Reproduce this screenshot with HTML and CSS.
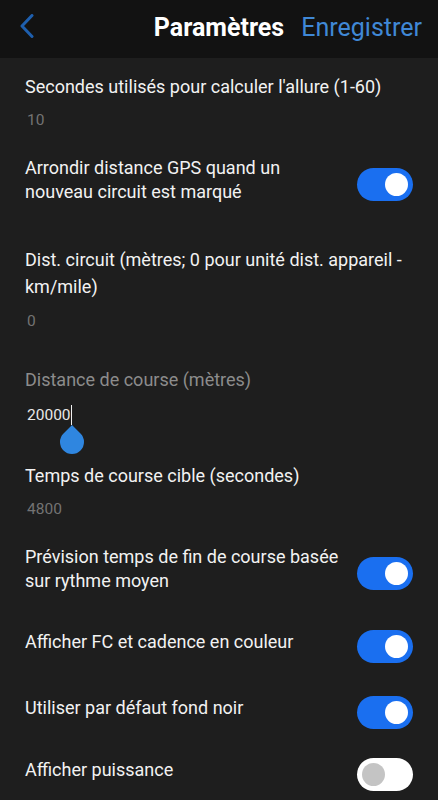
FILE: index.html
```html
<!DOCTYPE html>
<html lang="fr">
<head>
    <meta charset="UTF-8">
    <meta name="viewport" content="width=device-width, initial-scale=1.0">
    <title>Paramètres</title>
    <link rel="stylesheet" href="styles.css">
</head>
<body>
    <!-- Top bar -->
    <div class="topbar">
        <div class="back">
            <svg width="14" height="24" viewBox="0 0 14 24">
                <path d="M12 1.5 L2 12 L12 22.5" fill="none" stroke="#1e5fae" stroke-width="3" stroke-linecap="round" stroke-linejoin="round"/>
            </svg>
        </div>
        <h1 class="title">Paramètres</h1>
        <div class="save">Enregistrer</div>
    </div>

    <div class="settings">
        <div class="field">
            <div class="label">Secondes utilisés pour calculer l'allure (1-60)</div>
            <div class="value">10</div>
        </div>

        <div class="switch-row first-switch">
            <div class="label">Arrondir distance GPS quand un nouveau circuit est marqué</div>
            <span class="switch on"></span>
        </div>

        <div class="field lap">
            <div class="label">Dist. circuit (mètres; 0 pour unité dist. appareil - km/mile)</div>
            <div class="value">0</div>
        </div>

        <div class="field focused">
            <div class="label hint">Distance de course (mètres)</div>
            <div class="value typed">20000<span class="cursor"><span class="handle"></span></span></div>
        </div>

        <div class="field">
            <div class="label">Temps de course cible (secondes)</div>
            <div class="value">4800</div>
        </div>

        <div class="switch-row predict">
            <div class="label">Prévision temps de fin de course basée sur rythme moyen</div>
            <span class="switch on"></span>
        </div>

        <div class="switch-row">
            <div class="label">Afficher FC et cadence en couleur</div>
            <span class="switch on"></span>
        </div>

        <div class="switch-row dark">
            <div class="label">Utiliser par défaut fond noir</div>
            <span class="switch on"></span>
        </div>

        <div class="switch-row">
            <div class="label">Afficher puissance</div>
            <span class="switch"></span>
        </div>
    </div>
</body>
</html>
```

FILE: styles.css
```css
body {
    margin: 0;
    background: #1e1e1e;
    font-family: Roboto, "Liberation Sans", sans-serif;
    color: #f2f2f2;
}
.topbar {
    height: 58px;
    background: #121212;
    display: grid;
    grid-template-columns: 1fr auto 1fr;
    align-items: center;
}
.back {
    padding-left: 20px;
    padding-bottom: 6px;
    display: flex;
    align-items: center;
}
.title {
    margin: 0;
    font-size: 25px;
    font-weight: bold;
    color: #ffffff;
    padding-bottom: 4px;
}
.save {
    justify-self: end;
    padding-right: 16px;
    padding-bottom: 4px;
    font-size: 25px;
    color: #4088d6;
}
.settings {
    padding: 16px 25px 0 25px;
}
.label {
    font-size: 18px;
    line-height: 25px;
}
.hint {
    color: #8c8c8c;
}
.value {
    font-size: 15.5px;
    line-height: 20px;
    color: #737373;
    margin: 11px 0 0 2px;
}
.field {
    margin-bottom: 26px;
}
.field.lap {
    margin-bottom: 36px;
}
.field.lap .label {
    line-height: 27px;
}
.field.focused {
    margin-bottom: 38px;
}
.typed {
    color: #e8e8e8;
    margin-top: 13px;
}
.cursor {
    position: relative;
    display: inline-block;
    width: 1.5px;
    height: 20px;
    vertical-align: top;
    background: #f0f0f0;
}
.handle {
    position: absolute;
    left: -11px;
    top: 25px;
    width: 24px;
    height: 24px;
    background: #2f86e0;
    border-radius: 0 50% 50% 50%;
    transform: rotate(45deg);
}
.switch-row {
    display: flex;
    align-items: center;
    justify-content: space-between;
    gap: 8px;
    margin-bottom: 24px;
}
.switch-row .label {
    flex: 1;
    line-height: 24px;
}
.first-switch {
    margin-bottom: 42px;
}
.switch-row.predict {
    margin-bottom: 28px;
}
.switch-row.dark {
    margin-bottom: 20px;
}
.switch {
    position: relative;
    flex: none;
    width: 56px;
    height: 33px;
    border-radius: 17px;
    background: #ffffff;
    margin-top: 9px;
}
.switch::after {
    content: "";
    position: absolute;
    left: 5px;
    top: 5px;
    width: 23px;
    height: 23px;
    border-radius: 50%;
    background: #c4c4c4;
}
.switch.on {
    background: #1a6ff0;
}
.switch.on::after {
    left: 28px;
    background: #ffffff;
}
```
